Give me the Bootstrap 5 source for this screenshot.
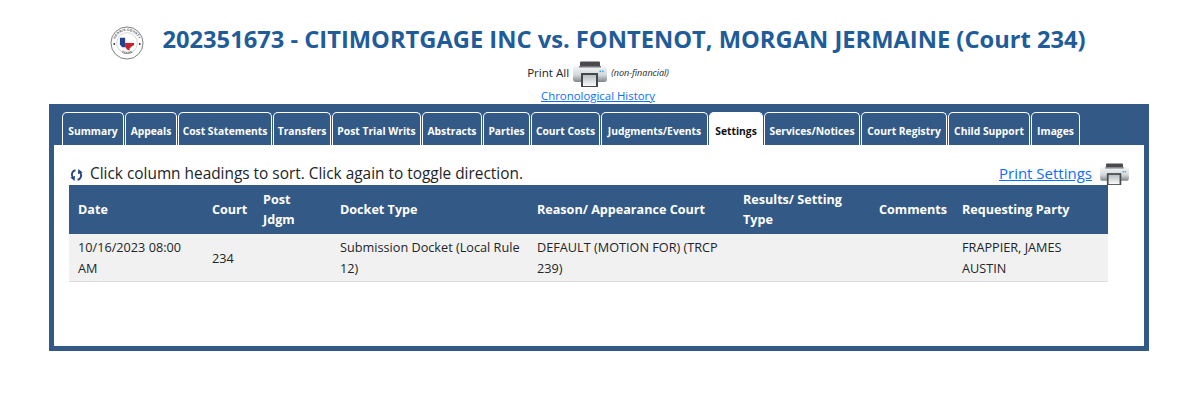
<!DOCTYPE html>
<html lang="en">
<head>
  <meta charset="UTF-8" />
  <title>Case Settings</title>
  <link href="https://cdn.jsdelivr.net/npm/bootstrap@5.3.3/dist/css/bootstrap.min.css" rel="stylesheet" />
  <style>
    body { font-family: "Open Sans", "Noto Sans", sans-serif; color: #212529; background: #fff; }
    .case-head { padding-top: 20px; height: 58px; gap: 18px; }
    .case-seal { margin-top: 7px; }
    .case-title { font-size: 23.7px; font-weight: 700; color: #1f5c99; margin: 0; line-height: 32px; }
    .print-all { height: 28px; font-size: 11.6px; margin-top: 1px; gap: 4px; }
    .print-all svg { margin-top: 2px; }
    .non-fin { font-size: 9px; font-style: italic; }
    .chrono { font-size: 11.4px; line-height: 15px; padding-top: 1px; }
    .case-frame { margin: 1px 47px 0 49px; border: 5px solid #335a86; border-top: 0; height: 247px; }
    .tab-strip { background: #335a86; height: 41px; padding: 8px 0 0 8px; gap: 1px; flex-wrap: nowrap; }
    .tab-strip .nav-link { height: 33px; padding: 0; text-align: center; font-size: 10.3px; font-weight: 700; line-height: 36px; color: #fff; white-space: nowrap;
      border: 1px solid #fff; border-bottom: 0; border-radius: 5px 5px 0 0; background: #335a86; }
    .tab-strip .nav-link.active { background: #fff; color: #111; }
    .tab-strip li:nth-child(1) a { width: 62px; }
    .tab-strip li:nth-child(2) a { width: 52px; }
    .tab-strip li:nth-child(3) a { width: 94px; }
    .tab-strip li:nth-child(4) a { width: 58px; }
    .tab-strip li:nth-child(5) a { width: 89px; }
    .tab-strip li:nth-child(6) a { width: 60px; }
    .tab-strip li:nth-child(7) a { width: 47px; }
    .tab-strip li:nth-child(8) a { width: 69px; }
    .tab-strip li:nth-child(9) a { width: 107px; }
    .tab-strip li:nth-child(10) a { width: 54px; }
    .tab-strip li:nth-child(11) a { width: 96px; }
    .tab-strip li:nth-child(12) a { width: 86px; }
    .tab-strip li:nth-child(13) a { width: 82px; }
    .tab-strip li:nth-child(14) a { width: 49px; }
    .pane { padding: 17px 15px 0 15px; }
    .sort-line { height: 23px; font-size: 15.4px; line-height: 23px; width: 1060px; }
    .sort-icon { margin: 0 7px 0 1px; vertical-align: -3px; }
    .print-link { font-size: 15px; margin-right: 8px; }
    .settings-table { width: 1039px; table-layout: fixed; font-size: 12.7px; margin: 0; }
    .settings-table th { background: #335a86; color: #fff; font-weight: 700; font-size: 12.6px; line-height: 20px; padding: 5px 9px 4px; vertical-align: middle; border: 0; }
    .settings-table td { background: #f1f1f1; color: #212529; line-height: 21px; padding: 3px 5px 2px 9px; vertical-align: middle; border-bottom: 1px solid #dcdcdc; box-shadow: none; }
    .settings-table tr > :nth-child(1) { width: 134px; }
    .settings-table tr > :nth-child(2) { width: 51px; }
    .settings-table tr > :nth-child(3) { width: 77px; }
    .settings-table tr > :nth-child(4) { width: 197px; }
    .settings-table tr > :nth-child(5) { width: 206px; }
    .settings-table tr > :nth-child(6) { width: 136px; }
    .settings-table tr > :nth-child(7) { width: 83px; }
    .settings-table tr > :nth-child(8) { width: 155px; }
    .seal-text { font-family: "Liberation Sans", sans-serif; font-size: 3.4px; font-weight: 700; fill: #444; letter-spacing: .3px; }
  </style>
</head>
<body>

  <svg width="0" height="0" class="position-absolute">
    <defs>
      <linearGradient id="printerBody" x1="0" y1="0" x2="0" y2="1">
        <stop offset="0" stop-color="#f4f6f7"/>
        <stop offset="0.55" stop-color="#d5d9db"/>
        <stop offset="1" stop-color="#7f868b"/>
      </linearGradient>
      <linearGradient id="printerPaper" x1="0" y1="0" x2="0" y2="1">
        <stop offset="0" stop-color="#b9bdc0"/>
        <stop offset="1" stop-color="#fafafa"/>
      </linearGradient>
      <symbol id="printer" viewBox="0 0 34 26">
        <rect x="7" y="0.500" width="20" height="6" rx="1" fill="#4a4a4e"/>
        <path d="M3 5h28q3 0 3 3v10q0 3-3 3H3q-3 0-3-3V8q0-3 3-3z" fill="url(#printerBody)"/>
        <rect x="6" y="5" width="22" height="1.500" fill="#77797c"/>
        <rect x="8" y="12" width="17" height="14" fill="#45484b"/>
        <rect x="10" y="14" width="13" height="11" fill="url(#printerPaper)"/>
        <rect x="26.500" y="9.500" width="1.600" height="1.600" fill="#46a3d8"/>
        <rect x="29" y="9.500" width="1.600" height="1.600" fill="#46a3d8"/>
      </symbol>
    </defs>
  </svg>

  <!-- Case heading -->
  <div class="case-head d-flex justify-content-center align-items-center">
    <svg class="case-seal" width="34" height="34" viewBox="0 0 36 36">
      <circle cx="18" cy="18" r="17" fill="#fff" stroke="#777" stroke-width="1"/>
      <circle cx="18" cy="18" r="11" fill="#fff" stroke="#aaa" stroke-width="0.5"/>
      <path id="sealTop" d="M5 18a13 13 0 0 1 26 0" fill="none"/>
      <path id="sealBottom" d="M7 23a12.500 12.500 0 0 0 22 0" fill="none"/>
      <text class="seal-text" text-anchor="middle"><textPath href="#sealTop" startOffset="50%">HARRIS COUNTY</textPath></text>
      <text class="seal-text" text-anchor="middle"><textPath href="#sealBottom" startOffset="50%">TEXAS</textPath></text>
      <path d="M11 13l5-1 .5 4 6 1 3 1v2l-3 2-2 2 .5 2-3-1-2-3-2-1-3-3z" fill="#f2f2f2"/>
      <path d="M10.500 12.500h5.500v10h-3l-2.500-3z" fill="#23418f"/>
      <path d="M16 18h9.500v2l-3 2-2 2 .5 2-3-1-2-3z" fill="#c8202c"/>
      <circle cx="4.500" cy="19" r="1" fill="#333"/>
      <circle cx="31.500" cy="19" r="1" fill="#333"/>
    </svg>
    <h1 class="case-title">202351673 - CITIMORTGAGE INC vs. FONTENOT, MORGAN JERMAINE (Court 234)</h1>
  </div>

  <div class="print-all d-flex justify-content-center align-items-center">
    <span>Print All</span>
    <svg width="34" height="26"><use href="#printer"/></svg>
    <span class="non-fin">(non-financial)</span>
  </div>
  <div class="text-center chrono"><a href="#">Chronological History</a></div>

  <!-- Main frame -->
  <div class="case-frame">
    <ul class="nav tab-strip">
      <li class="nav-item"><a class="nav-link" href="#">Summary</a></li>
      <li class="nav-item"><a class="nav-link" href="#">Appeals</a></li>
      <li class="nav-item"><a class="nav-link" href="#">Cost Statements</a></li>
      <li class="nav-item"><a class="nav-link" href="#">Transfers</a></li>
      <li class="nav-item"><a class="nav-link" href="#">Post Trial Writs</a></li>
      <li class="nav-item"><a class="nav-link" href="#">Abstracts</a></li>
      <li class="nav-item"><a class="nav-link" href="#">Parties</a></li>
      <li class="nav-item"><a class="nav-link" href="#">Court Costs</a></li>
      <li class="nav-item"><a class="nav-link" href="#">Judgments/Events</a></li>
      <li class="nav-item"><a class="nav-link active" href="#">Settings</a></li>
      <li class="nav-item"><a class="nav-link" href="#">Services/Notices</a></li>
      <li class="nav-item"><a class="nav-link" href="#">Court Registry</a></li>
      <li class="nav-item"><a class="nav-link" href="#">Child Support</a></li>
      <li class="nav-item"><a class="nav-link" href="#">Images</a></li>
    </ul>

    <div class="pane">
      <div class="sort-line d-flex justify-content-between align-items-center">
        <span>
          <svg class="sort-icon" width="13" height="14" viewBox="0 0 13 14" fill="none" stroke="#24457c" stroke-width="1.900">
            <path d="M5.500 2.200C2.500 2.500 .6 6.500 2.800 9.500"/>
            <path d="M.4 9.500L5 8l-.4 5z" fill="#24457c" stroke="none"/>
            <path d="M7.500 11.800C10.500 11.500 12.400 7.500 10.200 4.500"/>
            <path d="M12.600 4.500L8 6l.4-5z" fill="#24457c" stroke="none"/>
          </svg>Click column headings to sort. Click again to toggle direction.
        </span>
        <span class="d-flex align-items-center">
          <a class="print-link" href="#">Print Settings</a>
          <svg width="29" height="22"><use href="#printer"/></svg>
        </span>
      </div>

      <table class="table settings-table">
        <thead>
          <tr>
            <th>Date</th>
            <th>Court</th>
            <th>Post Jdgm</th>
            <th>Docket Type</th>
            <th>Reason/ Appearance Court</th>
            <th>Results/ Setting Type</th>
            <th>Comments</th>
            <th>Requesting Party</th>
          </tr>
        </thead>
        <tbody>
          <tr>
            <td>10/16/2023 08:00 AM</td>
            <td>234</td>
            <td></td>
            <td>Submission Docket (Local Rule 12)</td>
            <td>DEFAULT (MOTION FOR) (TRCP 239)</td>
            <td></td>
            <td></td>
            <td>FRAPPIER, JAMES AUSTIN</td>
          </tr>
        </tbody>
      </table>
    </div>
  </div>

  <script src="https://cdn.jsdelivr.net/npm/bootstrap@5.3.3/dist/js/bootstrap.bundle.min.js"></script>
</body>
</html>
